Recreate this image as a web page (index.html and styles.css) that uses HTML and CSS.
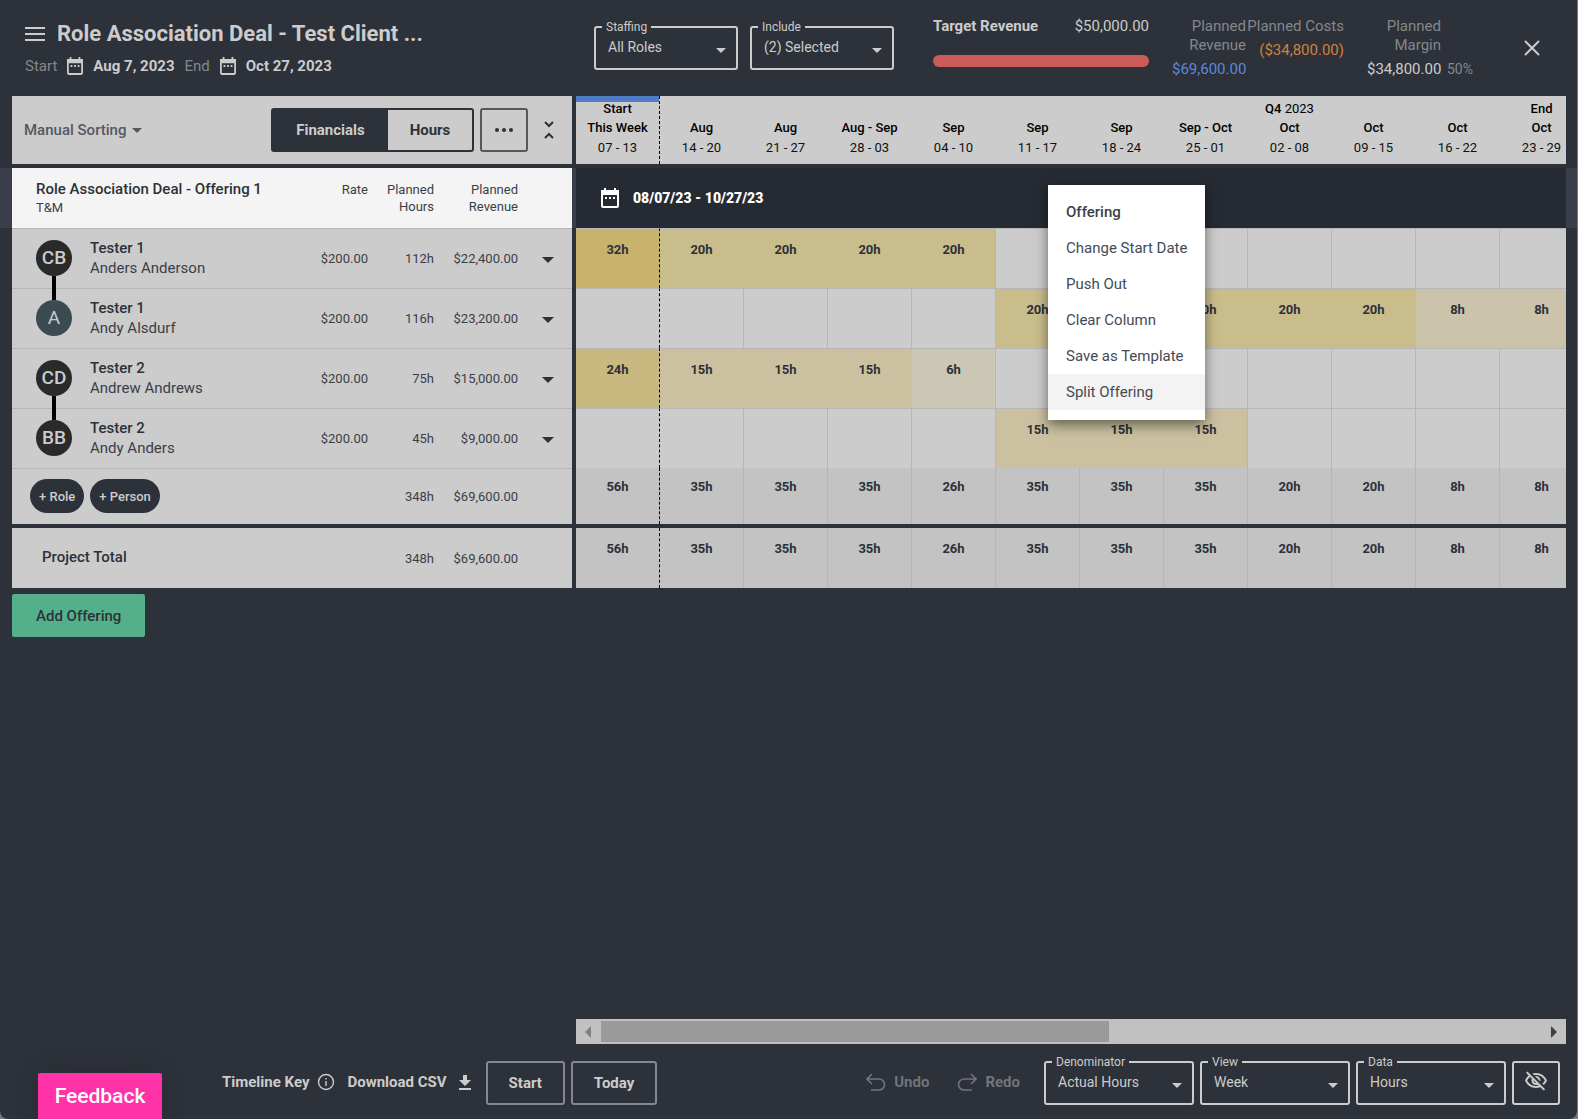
FILE: index.html
```html
<!DOCTYPE html>
<html lang="en">
<head>
    <meta charset="utf-8">
    <meta name="viewport" content="width=device-width, initial-scale=1">
    <title>Role Association Deal - Test Client</title>
    <link rel="stylesheet" href="styles.css">
</head>
<body>
<svg class="sprite" width="0" height="0">
    <symbol id="calendar" viewBox="0 0 18 20">
        <path d="M1 4h16v14a1 1 0 0 1-1 1H2a1 1 0 0 1-1-1z" fill="none" stroke="currentColor" stroke-width="2"/>
        <path d="M0 2h3V0h2v2h8V0h2v2h3v5H0z" fill="currentColor"/>
        <path d="M4 9h2v2H4zM8 9h2v2H8zM12 9h2v2h-2z" fill="currentColor"/>
    </symbol>
    <symbol id="caret" viewBox="0 0 12 6">
        <path d="M0 0h12L6 6z" fill="currentColor"/>
    </symbol>
</svg>
<div class="app">
    <header class="top">
        <div class="deal">
            <div class="deal-title">
                <button class="icon-btn" aria-label="Menu">
                    <svg width="20" height="14" viewBox="0 0 20 14"><path d="M0 1h20M0 7h20M0 13h20" stroke="currentColor" stroke-width="2"/></svg>
                </button>
                <h1>Role Association Deal - Test Client ...</h1>
            </div>
            <div class="deal-dates">
                <span class="muted">Start</span>
                <svg width="16" height="18"><use href="#calendar"/></svg>
                <b>Aug 7, 2023</b>
                <span class="muted">End</span>
                <svg width="16" height="18"><use href="#calendar"/></svg>
                <b>Oct 27, 2023</b>
            </div>
        </div>

        <div class="filters">
            <fieldset class="field">
                <legend><label for="staffing">Staffing</label></legend>
                <select id="staffing"><option>All Roles</option></select>
                <svg width="10" height="5"><use href="#caret"/></svg>
            </fieldset>
            <fieldset class="field">
                <legend><label for="include">Include</label></legend>
                <select id="include"><option>(2) Selected</option></select>
                <svg width="10" height="5"><use href="#caret"/></svg>
            </fieldset>
        </div>

        <div class="stats">
            <div class="target">
                <div class="target-row"><b>Target Revenue</b><span>$50,000.00</span></div>
                <div class="target-bar"></div>
            </div>
            <div class="stat revenue">
                <span class="muted">Planned Revenue</span>
                <span class="value blue">$69,600.00</span>
            </div>
            <div class="stat costs">
                <span class="muted">Planned Costs</span>
                <span class="value orange">($34,800.00)</span>
            </div>
            <div class="stat margin">
                <span class="muted">Planned Margin</span>
                <span class="value">$34,800.00</span>
            </div>
            <span class="percent muted">50%</span>
        </div>
        <button class="icon-btn close" aria-label="Close">
            <svg width="16" height="16" viewBox="0 0 16 16"><path d="M1 1l14 14M15 1L1 15" stroke="currentColor" stroke-width="2"/></svg>
        </button>
    </header>

    <main class="board">
        <section class="roles">
            <div class="toolbar">
                <button class="sorting">Manual Sorting <svg width="10" height="5"><use href="#caret"/></svg></button>
                <div class="toggle">
                    <button class="active">Financials</button><button>Hours</button>
                </div>
                <button class="more" aria-label="More">
                    <svg width="18" height="4" viewBox="0 0 18 4"><circle cx="2" cy="2" r="2"/><circle cx="9" cy="2" r="2"/><circle cx="16" cy="2" r="2"/></svg>
                </button>
                <button class="icon-btn collapse" aria-label="Collapse">
                    <svg width="10" height="18" viewBox="0 0 10 18"><path d="M1 1l4 4 4-4M1 17l4-4 4 4" fill="none" stroke="currentColor" stroke-width="2"/></svg>
                </button>
            </div>

            <table class="people">
                <colgroup><col><col class="c-rate"><col class="c-hours"><col class="c-revenue"><col class="c-arrow"></colgroup>
                <tr class="offering">
                    <th><strong>Role Association Deal - Offering 1</strong><span>T&amp;M</span></th>
                    <th>Rate</th>
                    <th>Planned Hours</th>
                    <th>Planned Revenue</th>
                    <th></th>
                </tr>
                <tr class="person">
                    <td><div class="who linked"><span class="avatar">CB</span><div><strong>Tester 1</strong><span>Anders Anderson</span></div></div></td>
                    <td>$200.00</td>
                    <td>112h</td>
                    <td>$22,400.00</td>
                    <td><button class="icon-btn" aria-label="Options"><svg width="12" height="6"><use href="#caret"/></svg></button></td>
                </tr>
                <tr class="person">
                    <td><div class="who"><span class="avatar teal">A</span><div><strong>Tester 1</strong><span>Andy Alsdurf</span></div></div></td>
                    <td>$200.00</td>
                    <td>116h</td>
                    <td>$23,200.00</td>
                    <td><button class="icon-btn" aria-label="Options"><svg width="12" height="6"><use href="#caret"/></svg></button></td>
                </tr>
                <tr class="person">
                    <td><div class="who linked"><span class="avatar">CD</span><div><strong>Tester 2</strong><span>Andrew Andrews</span></div></div></td>
                    <td>$200.00</td>
                    <td>75h</td>
                    <td>$15,000.00</td>
                    <td><button class="icon-btn" aria-label="Options"><svg width="12" height="6"><use href="#caret"/></svg></button></td>
                </tr>
                <tr class="person">
                    <td><div class="who"><span class="avatar">BB</span><div><strong>Tester 2</strong><span>Andy Anders</span></div></div></td>
                    <td>$200.00</td>
                    <td>45h</td>
                    <td>$9,000.00</td>
                    <td><button class="icon-btn" aria-label="Options"><svg width="12" height="6"><use href="#caret"/></svg></button></td>
                </tr>
                <tr class="sum">
                    <td><div class="adders"><button class="pill">+ Role</button><button class="pill">+ Person</button></div></td>
                    <td></td>
                    <td>348h</td>
                    <td>$69,600.00</td>
                    <td></td>
                </tr>
                <tr class="total">
                    <td>Project Total</td>
                    <td></td>
                    <td>348h</td>
                    <td>$69,600.00</td>
                    <td></td>
                </tr>
            </table>
            <button class="add-offering">Add Offering</button>
        </section>

        <section class="timeline">
            <div class="weeks">
                <table>
                    <tr class="dates">
                        <th class="now"><b>Start</b><b>This Week</b><span>07 - 13</span></th>
                        <th><b></b><b>Aug</b><span>14 - 20</span></th>
                        <th><b></b><b>Aug</b><span>21 - 27</span></th>
                        <th><b></b><b>Aug - Sep</b><span>28 - 03</span></th>
                        <th><b></b><b>Sep</b><span>04 - 10</span></th>
                        <th><b></b><b>Sep</b><span>11 - 17</span></th>
                        <th><b></b><b>Sep</b><span>18 - 24</span></th>
                        <th><b></b><b>Sep - Oct</b><span>25 - 01</span></th>
                        <th><b>Q4 <i>2023</i></b><b>Oct</b><span>02 - 08</span></th>
                        <th><b></b><b>Oct</b><span>09 - 15</span></th>
                        <th><b></b><b>Oct</b><span>16 - 22</span></th>
                        <th><b>End</b><b>Oct</b><span>23 - 29</span></th>
                    </tr>
                    <tr class="gap"><td colspan="12"></td></tr>
                    <tr class="range">
                        <td colspan="12"><div><svg width="18" height="20"><use href="#calendar"/></svg>08/07/23 - 10/27/23</div></td>
                    </tr>
                    <tr>
                        <td class="now h32">32h</td>
                        <td class="h20">20h</td>
                        <td class="h20">20h</td>
                        <td class="h20">20h</td>
                        <td class="h20 end">20h</td>
                        <td></td><td></td><td></td><td></td><td></td><td></td><td></td>
                    </tr>
                    <tr>
                        <td class="now"></td><td></td><td></td><td></td><td></td>
                        <td class="h20">20h</td>
                        <td class="h20"></td>
                        <td class="h20">20h</td>
                        <td class="h20">20h</td>
                        <td class="h20">20h</td>
                        <td class="h8">8h</td>
                        <td class="h8">8h</td>
                    </tr>
                    <tr>
                        <td class="now h24">24h</td>
                        <td class="h15">15h</td>
                        <td class="h15">15h</td>
                        <td class="h15">15h</td>
                        <td class="h6 end">6h</td>
                        <td></td><td></td><td></td><td></td><td></td><td></td><td></td>
                    </tr>
                    <tr>
                        <td class="now"></td><td></td><td></td><td></td><td></td>
                        <td class="h15">15h</td>
                        <td class="h15">15h</td>
                        <td class="h15 end">15h</td>
                        <td></td><td></td><td></td><td></td>
                    </tr>
                    <tr class="sum">
                        <td class="now">56h</td><td>35h</td><td>35h</td><td>35h</td><td>26h</td><td>35h</td>
                        <td>35h</td><td>35h</td><td>20h</td><td>20h</td><td>8h</td><td>8h</td>
                    </tr>
                    <tr class="gap"><td colspan="12"></td></tr>
                    <tr class="total">
                        <td class="now">56h</td><td>35h</td><td>35h</td><td>35h</td><td>26h</td><td>35h</td>
                        <td>35h</td><td>35h</td><td>20h</td><td>20h</td><td>8h</td><td>8h</td>
                    </tr>
                </table>
            </div>

            <div class="menu" role="menu">
                <strong>Offering</strong>
                <button role="menuitem">Change Start Date</button>
                <button role="menuitem">Push Out</button>
                <button role="menuitem">Clear Column</button>
                <button role="menuitem">Save as Template</button>
                <button role="menuitem" class="hover">Split Offering</button>
            </div>

            <div class="scrollbar">
                <svg width="6" height="12" viewBox="0 0 6 12"><path d="M6 0v12L0 6z" fill="#808080"/></svg>
                <div class="track"><div class="thumb"></div></div>
                <svg width="6" height="12" viewBox="0 0 6 12"><path d="M0 0v12l6-6z" fill="#404040"/></svg>
            </div>
        </section>
    </main>

    <footer class="bottom">
        <button class="feedback">Feedback</button>
        <button class="text-btn key">Timeline Key
            <svg width="18" height="18" viewBox="0 0 18 18"><circle cx="9" cy="9" r="7.5" fill="none" stroke="currentColor" stroke-width="1.4"/><path d="M9 8v5M9 5v1.6" stroke="currentColor" stroke-width="1.4"/></svg>
        </button>
        <a class="text-btn csv" href="#">Download CSV
            <svg width="12" height="15" viewBox="0 0 12 15"><path d="M4 0h4v5h4l-6 6-6-6h4zM0 13h12v2H0z" fill="currentColor"/></svg>
        </a>
        <button class="outline start">Start</button>
        <button class="outline">Today</button>
        <div class="history">
            <button class="text-btn" disabled>
                <svg width="20" height="18" viewBox="0 0 20 18"><path d="M6 1L1 6l5 5M1 6h12a5.500 5.500 0 0 1 0 11H5" fill="none" stroke="currentColor" stroke-width="1.600"/></svg>
                Undo
            </button>
            <button class="text-btn" disabled>
                <svg width="20" height="18" viewBox="0 0 20 18"><path d="M14 1l5 5-5 5M19 6H7a5.500 5.500 0 0 0 0 11h8" fill="none" stroke="currentColor" stroke-width="1.600"/></svg>
                Redo
            </button>
        </div>
        <fieldset class="field wide">
            <legend><label for="denominator">Denominator</label></legend>
            <select id="denominator"><option>Actual Hours</option></select>
            <svg width="10" height="5"><use href="#caret"/></svg>
        </fieldset>
        <fieldset class="field wide">
            <legend><label for="view">View</label></legend>
            <select id="view"><option>Week</option></select>
            <svg width="10" height="5"><use href="#caret"/></svg>
        </fieldset>
        <fieldset class="field wide">
            <legend><label for="data">Data</label></legend>
            <select id="data"><option>Hours</option></select>
            <svg width="10" height="5"><use href="#caret"/></svg>
        </fieldset>
        <button class="outline eye" aria-label="Hide">
            <svg width="24" height="24" viewBox="0 0 24 24"><path fill="currentColor" d="M12 6c3.790 0 7.170 2.130 8.820 5.500-.59 1.220-1.420 2.270-2.410 3.120l1.410 1.410c1.390-1.230 2.490-2.770 3.180-4.530C21.270 7.110 17 4 12 4c-1.270 0-2.490.2-3.640.57l1.650 1.650C10.660 6.090 11.320 6 12 6zm-1.070 1.140L13 9.210c.57.25 1.030.71 1.280 1.280l2.070 2.070c.08-.34.14-.7.14-1.070C16.500 9.010 14.480 7 12 7c-.37 0-.72.05-1.070.14zM2.010 3.870l2.680 2.680C3.060 7.830 1.770 9.530 1 11.500 2.730 15.890 7 19 12 19c1.520 0 2.980-.29 4.320-.82l3.420 3.420 1.410-1.410L3.420 2.450 2.010 3.870zm7.500 7.500l2.610 2.610c-.04.01-.08.02-.12.02-1.380 0-2.500-1.120-2.500-2.500 0-.05.01-.08.01-.13zm-3.400-3.400l1.750 1.750c-.23.55-.36 1.150-.36 1.780 0 2.480 2.020 4.500 4.500 4.500.63 0 1.230-.13 1.770-.36l.98.98c-.88.24-1.800.38-2.750.38-3.790 0-7.170-2.130-8.820-5.500.7-1.430 1.720-2.610 2.930-3.530z"/></svg>
        </button>
    </footer>
</div>
</body>
</html>
```

FILE: styles.css
```css
* {
    box-sizing: border-box;
}

body {
    margin: 0;
    background-color: #77797e;
    font-family: Roboto, "Liberation Sans", sans-serif;
    font-size: 15px;
    color: #2d3139;
}

button, select {
    font-family: inherit;
    font-size: 15px;
    color: inherit;
}

button {
    cursor: pointer;
}

.sprite {
    position: absolute;
}

.app {
    display: flex;
    flex-direction: column;
    min-height: 100vh;
    margin-right: 1px;
    background-color: #2d3139;
    border-radius: 0 0 8px 8px;
}

.icon-btn {
    display: inline-flex;
    padding: 0;
    border: none;
    background: none;
}

.muted {
    color: #85878b;
}

/* header */
.top {
    display: flex;
    height: 96px;
    padding: 0 37px 0 25px;
    color: #ccc;
}

.deal {
    width: 569px;
    padding-top: 20px;
}

.deal-title {
    display: flex;
    align-items: center;
    gap: 12px;
}

.deal-title h1 {
    margin: 0;
    font-size: 22px;
    line-height: 28px;
}

.deal-dates {
    display: flex;
    align-items: center;
    gap: 10px;
    margin-top: 8px;
    line-height: 20px;
}

.filters {
    display: flex;
    gap: 12px;
    padding-top: 20px;
}

/* outlined select with its label in the border */
.field {
    display: flex;
    align-items: center;
    position: relative;
    width: 144px;
    height: 50px;
    margin: 0;
    padding: 0;
    border: 2px solid #ccc;
    border-radius: 3px;
}

.field.wide {
    width: 150px;
}

.field legend {
    margin-left: 6px;
    padding: 0 4px;
    font-size: 12px;
    line-height: 14px;
}

.field select {
    appearance: none;
    width: 100%;
    height: 32px;
    padding: 0 28px 8px 12px;
    border: none;
    background: none;
    outline: none;
    font-size: 14px;
}

.field svg {
    position: absolute;
    right: 10px;
    top: 14px;
    pointer-events: none;
}

.stats {
    display: flex;
    padding-top: 17px;
    line-height: 19px;
}

.target {
    width: 216px;
    margin-left: 39px;
}

.target-row {
    display: flex;
    justify-content: space-between;
}

.target-bar {
    height: 12px;
    margin-top: 19px;
    border-radius: 6px;
    background-color: #cc5c5a;
}

.stat {
    display: flex;
    flex-direction: column;
    text-align: right;
}

.stat .value {
    margin-top: 5px;
}

.revenue {
    width: 74px;
    margin-left: 23px;
}

.costs {
    width: 98px;
}

.margin {
    width: 74px;
    margin-left: 23px;
}

.percent {
    margin: 43px 0 0 6px;
    font-size: 14px;
}

.blue {
    color: #5c88da;
}

.orange {
    color: #d0813f;
}

.close {
    align-self: center;
    margin-left: auto;
}

/* board */
.board {
    display: grid;
    grid-template-columns: 560px minmax(0, 1fr);
    gap: 4px;
    flex: 1;
    padding: 0 11px 0 12px;
    background: linear-gradient(#393e4a, #393e4a) 0 72px / 100% 60px no-repeat;
}

table {
    border-spacing: 0;
    table-layout: fixed;
    width: 100%;
}

td, th {
    padding: 0;
    font-weight: 400;
}

.toolbar {
    display: flex;
    align-items: center;
    height: 68px;
    margin-bottom: 4px;
    padding: 0 18px 0 12px;
    background-color: #ccc;
}

.sorting {
    display: flex;
    align-items: center;
    gap: 6px;
    margin-right: auto;
    padding: 0;
    border: none;
    background: none;
    font-weight: 500;
    color: #55585e;
}

.toggle {
    display: flex;
    height: 44px;
    border: 2px solid #2d3139;
    border-radius: 3px;
}

.toggle button {
    width: 84px;
    padding: 0;
    border: none;
    background: none;
    font-weight: 700;
}

.toggle .active {
    width: 115px;
    background-color: #2d3139;
    color: #ccc;
}

.more {
    display: flex;
    align-items: center;
    justify-content: center;
    width: 48px;
    height: 44px;
    margin: 0 16px 0 6px;
    border: 2px solid #55585e;
    border-radius: 3px;
    background: none;
    fill: #2d3139;
}

.c-rate {
    width: 90px;
}

.c-hours {
    width: 66px;
}

.c-revenue {
    width: 84px;
}

.c-arrow {
    width: 54px;
}

.people {
    background-color: #ccc;
    color: #3a3f49;
    font-size: 13px;
}

.people td, .people th {
    text-align: right;
}

.people td:first-child, .people th:first-child {
    padding-left: 24px;
    text-align: left;
    font-size: 15px;
}

.offering {
    height: 60px;
    background-color: #f4f4f4;
}

.offering th {
    padding-top: 13px;
    line-height: 17px;
    vertical-align: top;
}

.offering th:nth-child(3) {
    padding-left: 12px;
}

.offering th:nth-child(4) {
    padding-left: 24px;
}

.people strong {
    display: block;
    font-weight: 500;
    color: #2d3139;
}

.people th span {
    font-size: 13px;
    line-height: 20px;
}

.person {
    height: 60px;
}

.person td, .people .sum td {
    padding-bottom: 1px;
    border-top: 1px solid #b6b6b8;
}

.person td:last-child .icon-btn {
    margin-right: 18px;
    color: #2d3139;
}

.who {
    display: flex;
    align-items: center;
    gap: 18px;
    position: relative;
    line-height: 20px;
}

.avatar {
    display: flex;
    align-items: center;
    justify-content: center;
    width: 36px;
    height: 36px;
    border-radius: 50%;
    background-color: #2a2a2a;
    color: #ccc;
    font-size: 19px;
    font-weight: 500;
}

.avatar.teal {
    background-color: #3a4b51;
    font-weight: 400;
}

/* bar that joins two people on the same role */
.linked::after {
    content: "";
    position: absolute;
    left: 16px;
    top: 38px;
    width: 4px;
    height: 24px;
    background-color: #000;
}

.people .sum {
    height: 56px;
}

.people .sum td:first-child {
    padding-left: 18px;
}

.adders {
    display: flex;
    gap: 6px;
}

.pill {
    height: 34px;
    padding: 0 9px;
    border: none;
    border-radius: 17px;
    background-color: #2d3139;
    color: #ccc;
    font-size: 13px;
    font-weight: 500;
}

.people .total td {
    height: 64px;
    border-top: 4px solid #2d3139;
}

.people .total td:first-child {
    padding: 0 0 2px 30px;
    font-weight: 500;
    color: #2d3139;
}

.add-offering {
    height: 43px;
    margin-top: 6px;
    padding: 0 24px;
    border: none;
    border-radius: 2px;
    background-color: #54b08a;
    font-weight: 500;
}

/* timeline */
.timeline {
    display: flex;
    flex-direction: column;
    position: relative;
}

.weeks {
    overflow: hidden;
}

.weeks table {
    width: 1008px;
    text-align: center;
    font-size: 13px;
}

.weeks td {
    height: 60px;
    padding-top: 13px;
    border-top: 1px solid #b6b6b8;
    border-right: 1px solid #b6b6b8;
    background-color: #ccc;
    font-weight: 700;
    vertical-align: top;
    line-height: 16px;
}

.dates th {
    height: 68px;
    padding-top: 3px;
    border-right: 1px solid #ccc;
    background-color: #ccc;
    color: #111;
    line-height: 19px;
    vertical-align: top;
}

.dates b, .dates span {
    display: block;
    min-height: 19px;
}

.dates b {
    font-weight: 500;
    color: #000;
}

.dates span {
    line-height: 21px;
}

.dates i {
    font-style: normal;
    font-weight: 400;
}

.dates .now {
    background-image: linear-gradient(#4f7bc6, #4f7bc6);
    background-size: 100% 6px;
    background-repeat: no-repeat;
}

.weeks .now {
    border-right: 1px dashed #000;
}

.weeks .gap td {
    height: 4px;
    padding: 0;
    border: none;
    background-color: #2d3139;
    line-height: 0;
}

.weeks .range td {
    padding: 0;
    border: none;
    background-color: #262a33;
    color: #fff;
    font-size: 14px;
    font-weight: 900;
    vertical-align: middle;
}

.range div {
    display: flex;
    align-items: center;
    gap: 14px;
    padding-left: 25px;
}

.weeks .h32, .weeks .h24, .weeks .h20, .weeks .h15, .weeks .h8, .weeks .h6 {
    border-right-color: transparent;
}

.weeks .now.h32, .weeks .now.h24 {
    border-right-color: #000;
}

.weeks .end {
    border-right-color: #b6b6b8;
}

.weeks .h32 {
    background-color: #c8b36c;
}

.weeks .h24 {
    background-color: #c9b87f;
}

.weeks .h20 {
    background-color: #cabd8c;
}

.weeks .h15 {
    background-color: #cbc1a0;
}

.weeks .h8 {
    background-color: #cbc4aa;
}

.weeks .h6 {
    background-color: #cbc7b5;
}

.weeks .sum td {
    height: 56px;
    padding-top: 11px;
    border-top: none;
    background-color: #c3c3c3;
}

.weeks .total td {
    border-top: none;
    background-color: #c3c3c3;
}

.menu {
    display: flex;
    flex-direction: column;
    position: absolute;
    left: 472px;
    top: 89px;
    width: 157px;
    padding: 9px 0 10px;
    background-color: #fff;
    box-shadow: 0 5px 12px rgba(0, 0, 0, 0.5);
    color: #454a55;
}

.menu strong, .menu button {
    height: 36px;
    padding: 0 18px;
    border: none;
    background: none;
    line-height: 36px;
    text-align: left;
    white-space: nowrap;
}

.menu strong {
    font-weight: 500;
    color: #3a3f49;
}

.menu .hover {
    background-color: #f3f3f3;
}

.scrollbar {
    display: flex;
    align-items: center;
    gap: 10px;
    height: 25px;
    margin-top: auto;
    padding: 0 9px;
    background-color: #c1c1c1;
}

.track {
    flex: 1;
}

.thumb {
    width: 54%;
    height: 21px;
    background-color: #9a9a9a;
}

/* footer */
.bottom {
    display: flex;
    height: 75px;
    padding: 11px 17px 0 38px;
    color: #ccc;
}

.feedback {
    align-self: flex-end;
    width: 124px;
    height: 46px;
    margin-right: 60px;
    border: none;
    border-radius: 2px 2px 0 0;
    background-color: #ff32a8;
    box-shadow: 0 0 24px rgba(0, 0, 0, 0.15);
    color: #fff;
    font-size: 21px;
    font-weight: 500;
}

.text-btn {
    display: flex;
    align-items: center;
    gap: 8px;
    height: 44px;
    margin-top: 5px;
    padding: 0;
    border: none;
    background: none;
    color: #ccc;
    font-weight: 700;
    text-decoration: none;
}

.csv {
    gap: 12px;
    margin-left: 12px;
}

.outline {
    height: 44px;
    margin-top: 6px;
    padding: 0 21px;
    border: 2px solid #85888f;
    border-radius: 3px;
    background: none;
    font-weight: 700;
}

.outline.start {
    margin: 6px 6px 0 15px;
}

.history {
    display: flex;
    gap: 28px;
    margin: 0 24px 0 auto;
}

.history .text-btn {
    color: #717479;
}

.field.wide {
    margin-right: 6px;
}

.outline.eye {
    width: 48px;
    padding: 0 10px;
    border-color: #ccc;
}
```
